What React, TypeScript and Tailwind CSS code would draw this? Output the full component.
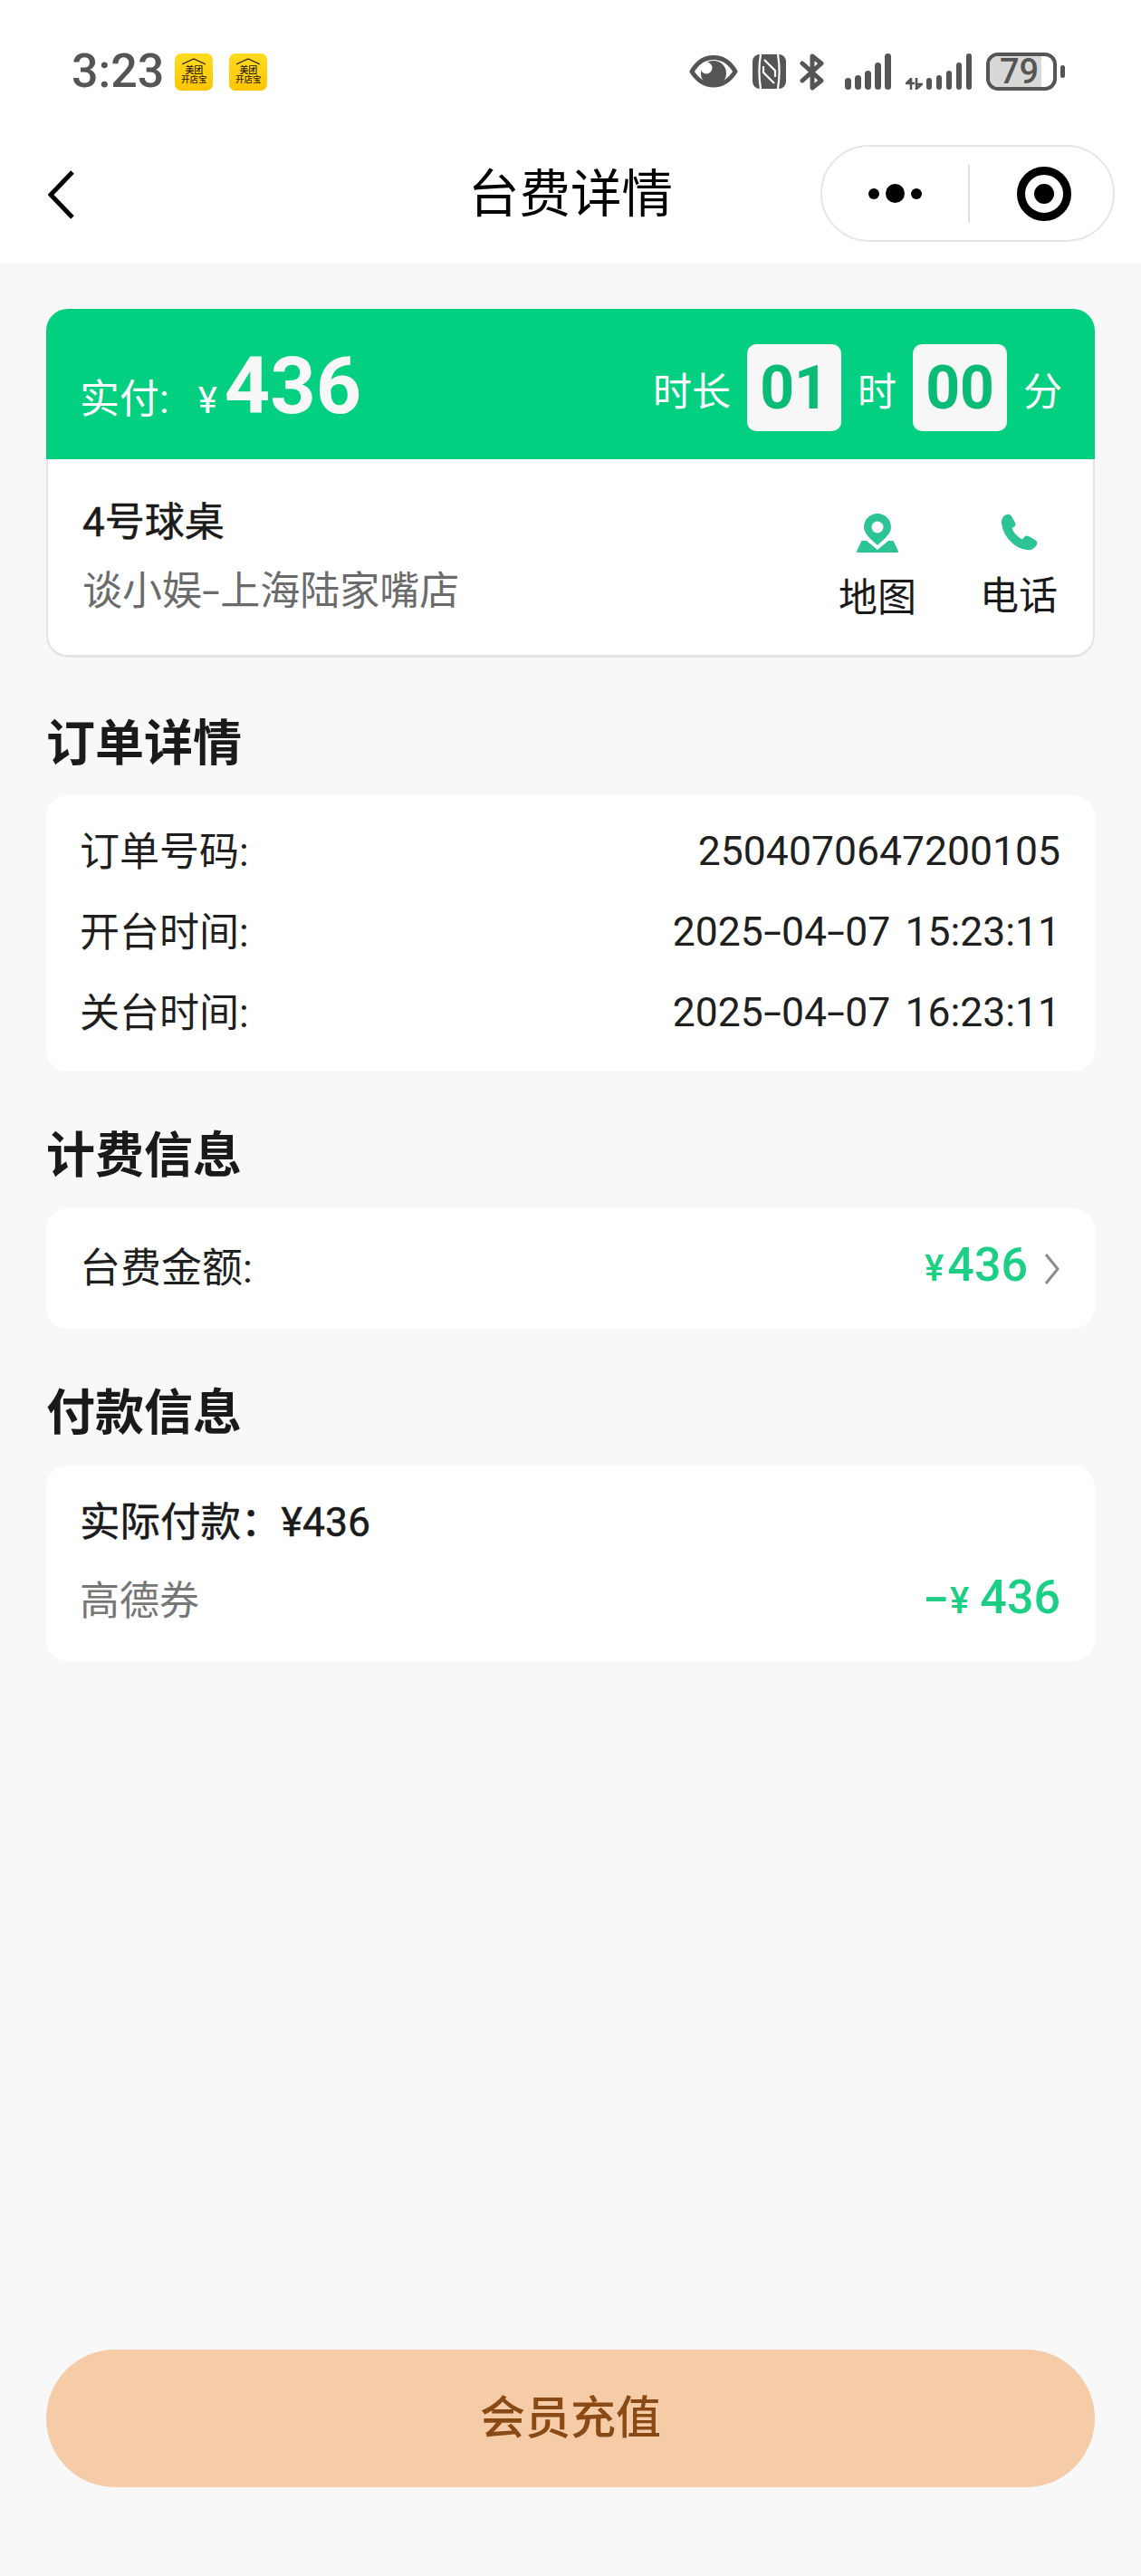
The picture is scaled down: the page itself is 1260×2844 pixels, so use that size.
import React from "react";

const StoreIcon = () => (
  <div className="flex h-[41px] w-[42px] flex-col items-center rounded-[7px] bg-gradient-to-b from-[#ffdc1e] to-[#ffc400] pt-[5px] font-medium text-[#2b2000]">
    <svg width="26" height="8" viewBox="0 0 26 8" className="shrink-0">
      <path d="M0 7 L13 1 L26 7" fill="none" stroke="#2b2000" strokeWidth="1.2" />
    </svg>
    <span className="mt-[1px] text-[10px] leading-[10px]">美团</span>
    <span className="text-[9.5px] leading-[10px]">开店宝</span>
  </div>
);

const EyeIcon = () => (
  <svg width="54" height="36" viewBox="0 0 54 36">
    <path d="M3 18 C10 6 18 2.5 27 2.5 C36 2.5 44 6 51 18 C44 29 36 33 27 33 C18 33 10 29 3 18Z" fill="none" stroke="#555" strokeWidth="5" strokeLinejoin="round" />
    <circle cx="27" cy="20" r="14" fill="#555" />
    <circle cx="19" cy="14" r="6.5" fill="#fff" />
  </svg>
);

const NfcIcon = () => (
  <svg width="37" height="38" viewBox="0 0 37 38">
    <rect width="37" height="38" rx="8" fill="#555" />
    <path d="M9 0 C7 12 7 26 9 38 M28 0 C30 12 30 26 28 38" fill="none" stroke="#fff" strokeWidth="2.2" />
    <path d="M13 6 L25 18 V25 M12 13 V20 L24 32" fill="none" stroke="#fff" strokeWidth="2.2" />
  </svg>
);

const BluetoothIcon = () => (
  <svg width="27" height="41" viewBox="0 0 27 41">
    <path d="M3 11 L24 30 L14 38 V3 L24 11 L3 30" fill="none" stroke="#555" strokeWidth="5" strokeLinecap="round" strokeLinejoin="round" />
  </svg>
);

const SignalBars = () => (
  <div className="flex items-end gap-[4.5px]">
    <div className="h-[13px] w-[6.5px] rounded-full bg-[#555]" />
    <div className="h-[16px] w-[6.5px] rounded-full bg-[#555]" />
    <div className="h-[21px] w-[6.5px] rounded-full bg-[#555]" />
    <div className="h-[30px] w-[6.5px] rounded-full bg-[#555]" />
    <div className="h-[40px] w-[6.5px] rounded-full bg-[#555]" />
  </div>
);

const DataArrows = () => (
  <svg width="19" height="13" viewBox="0 0 19 13">
    <path d="M6 13 V1 L1 6 H10 M12 0 V12 L18 7 H12" fill="none" stroke="#555" strokeWidth="2.6" />
  </svg>
);

const Battery = () => (
  <div className="flex items-center gap-[4px]">
    <div className="relative flex h-[42px] w-[78px] items-center justify-center overflow-hidden rounded-[13px] border-[4px] border-[#555]">
      <div className="absolute inset-y-0 left-0 w-[57px] bg-[#d8d8d8]" />
      <span className="relative pr-[5px] text-[38px] font-medium leading-none text-[#555]">79</span>
    </div>
    <div className="h-[14px] w-[5px] rounded-full bg-[#555]" />
  </div>
);

const PinIcon = () => (
  <svg width="46" height="43" viewBox="0 0 46 43">
    <path d="M23 0 C14.7 0 8 6.7 8 15 C8 23 17 29 23 35 C29 29 38 23 38 15 C38 6.7 31.3 0 23 0Z" fill="#2cc397" />
    <circle cx="23" cy="15" r="6.5" fill="#fff" />
    <path d="M5.5 30 H11 L23 40 L35 30 H40.5 L46 41.5 Q46 43 44.5 43 H1.5 Q0 43 0 41.5Z" fill="#2cc397" />
  </svg>
);

const PhoneIcon = () => (
  <svg width="41" height="41" viewBox="0 0 41 41">
    <path d="M7 1 C9 0.5 11 1.5 12 3 L16 10 C17 12 16.5 13.5 15 14.5 L12.5 16 C14 21 19 26 24 28.5 L26 26 C27 24.5 29 24 31 25 L38 29 C40 30 41 32 40 34 C38 38 34 41 29 40 C14 38 2 24 1 10 C0.8 6 3 2 7 1Z" fill="#2cc397" />
  </svg>
);

// the reference font has a much wider hyphen than Roboto
const Dash = () => <span className="mx-[4px] inline-block scale-x-[1.6]">-</span>;

const SectionTitle = ({ children, top }: { children: React.ReactNode; top: string }) => (
  <h2 className={`flex h-[60px] items-center text-[54px] font-bold text-[#1a1a1a] ${top}`}>{children}</h2>
);

const InfoRow = ({ label, children }: { label: string; children: React.ReactNode }) => (
  <div className="flex h-[89px] items-center justify-between pl-[37px] pr-[38px] text-[#1f1f1f]">
    <span className="text-[44px]">{label}</span>
    <span className="text-[44.5px] [word-spacing:5px]">{children}</span>
  </div>
);

export default function App() {
  return (
    <div className="flex min-h-[2844px] w-[1260px] flex-col bg-[#f8f8f8] font-['Roboto','Noto_Sans_CJK_SC',sans-serif]">
      <header className="bg-white">
        <div className="flex h-[158px] items-center justify-between pl-[79px] pr-[84px]">
          <div className="flex items-center">
            <span className="text-[52px] font-medium leading-none text-[#555]">3:23</span>
            <div className="ml-[12px] flex gap-[18px]">
              <StoreIcon />
              <StoreIcon />
            </div>
          </div>
          <div className="flex items-center">
            <EyeIcon />
            <div className="ml-[16px]">
              <NfcIcon />
            </div>
            <div className="ml-[15px]">
              <BluetoothIcon />
            </div>
            <div className="ml-[23px]">
              <SignalBars />
            </div>
            <div className="ml-[16px] flex items-end gap-[4px] self-end pb-[1px]">
              <DataArrows />
              <SignalBars />
            </div>
            <div className="ml-[16px]">
              <Battery />
            </div>
          </div>
        </div>
        <div className="grid h-[132px] grid-cols-[1fr_auto_1fr] items-start pt-[2px]">
          <div className="pl-[53px] pt-[28px]">
            <svg width="29" height="54" viewBox="0 0 29 54">
              <path d="M27 2 L3 27 L27 52" fill="none" stroke="#000" strokeWidth="5" />
            </svg>
          </div>
          <h1 className="flex h-[107px] items-center pt-[4px] text-[56.5px] text-black">台费详情</h1>
          <div className="mr-[29px] flex h-[107px] w-[325px] items-center justify-self-end rounded-full border-2 border-[#e6e6e6]">
            <div className="flex w-[161px] items-center justify-center gap-[7px]">
              <div className="h-[12px] w-[12px] rounded-full bg-black" />
              <div className="h-[21px] w-[21px] rounded-full bg-black" />
              <div className="h-[12px] w-[12px] rounded-full bg-black" />
            </div>
            <div className="h-[64px] w-[2px] bg-[#e2e2e2]" />
            <div className="flex flex-1 items-center justify-center pl-[6px]">
              <div className="flex h-[60px] w-[60px] items-center justify-center rounded-full border-[9px] border-black">
                <div className="h-[22px] w-[22px] rounded-full bg-black" />
              </div>
            </div>
          </div>
        </div>
      </header>

      <main className="flex flex-1 flex-col px-[51px] pb-[98px] pt-[51px]">
        <section className="overflow-hidden rounded-[24px]">
          <div className="flex h-[166px] items-center justify-between bg-[#03cf80] pl-[37px] pr-[36px] pt-[8px] text-white">
            <div className="flex items-baseline">
              <span className="text-[44px]">实付:</span>
              <span className="ml-[32px] text-[40px]">¥</span>
              <span className="ml-[8px] text-[88px] font-bold leading-none text-[#f7f7f7]">436</span>
            </div>
            <div className="flex items-center gap-[18px] text-[43px]">
              <span className="pt-[10px]">时长</span>
              <div className="flex h-[96px] w-[104px] items-center justify-center rounded-[10px] bg-[#f7f7f7] text-[66px] font-bold text-[#0abb76]">01</div>
              <span className="pt-[10px]">时</span>
              <div className="flex h-[96px] w-[104px] items-center justify-center rounded-[10px] bg-[#f7f7f7] text-[66px] font-bold text-[#0abb76]">00</div>
              <span className="pt-[10px]">分</span>
            </div>
          </div>
          <div className="flex h-[219px] items-center justify-between rounded-b-[24px] border-x-2 border-b-[3px] border-[#e4e4e4] bg-white pl-[38px] pr-[39px]">
            <div className="flex flex-col">
              <span className="text-[44px] leading-[60px] text-[#1a1a1a] [-webkit-text-stroke:0.5px_#1a1a1a]">4号球桌</span>
              <span className="mt-[16px] text-[44px] leading-[60px] text-[#6b6b6b]">
                谈小娱<Dash />上海陆家嘴店
              </span>
            </div>
            <div className="flex gap-[70px] pt-[24px] text-[43px] leading-[56px] text-[#1a1a1a]">
              <div className="flex w-[86px] flex-col items-center gap-[22px]">
                <PinIcon />
                <span>地图</span>
              </div>
              <div className="flex w-[86px] flex-col items-center gap-[22px]">
                <PhoneIcon />
                <span>电话</span>
              </div>
            </div>
          </div>
        </section>

        <SectionTitle top="mt-[65px] mb-[27px]">订单详情</SectionTitle>
        <section className="rounded-[24px] bg-white pb-[20px] pt-[18px]">
          <InfoRow label="订单号码:">2504070647200105</InfoRow>
          <InfoRow label="开台时间:">
            2025<Dash />04<Dash />07 15:23:11
          </InfoRow>
          <InfoRow label="关台时间:">
            2025<Dash />04<Dash />07 16:23:11
          </InfoRow>
        </section>

        <SectionTitle top="mt-[63px] mb-[28px]">计费信息</SectionTitle>
        <section className="flex h-[133px] items-center justify-between rounded-[24px] bg-white pl-[37px] pr-[38px]">
          <span className="text-[45px] text-[#1f1f1f]">台费金额:</span>
          <div className="flex items-center gap-[18px]">
            <div className="flex items-baseline font-medium text-[#1ccf85]">
              <span className="mr-[4px] text-[40px]">¥</span>
              <span className="text-[52px] leading-none">436</span>
            </div>
            <svg width="18" height="36" viewBox="0 0 18 36">
              <path d="M2 2 L15 18 L2 34" fill="none" stroke="#8c8c8c" strokeWidth="3" />
            </svg>
          </div>
        </section>

        <SectionTitle top="mt-[63px] mb-[28px]">付款信息</SectionTitle>
        <section className="flex h-[216px] flex-col rounded-[24px] bg-white pl-[37px] pr-[38px] pt-[19px]">
          <div className="flex h-[88px] items-center text-[44.5px] text-[#1a1a1a] [-webkit-text-stroke:0.5px_#1a1a1a]">实际付款：¥436</div>
          <div className="flex h-[85px] items-center justify-between">
            <span className="text-[44px] text-[#777]">高德券</span>
            <div className="flex items-baseline font-medium text-[#1ccf85]">
              <span className="inline-block scale-x-[1.6] text-[52px] leading-none">-</span>
              <span className="ml-[6px] text-[40px]">¥</span>
              <span className="ml-[12px] text-[52px] leading-none">436</span>
            </div>
          </div>
        </section>

        <button className="mt-auto flex h-[152px] w-full items-center justify-center rounded-full bg-[#f6cba8] text-[50px] font-medium text-[#8a4a16]">
          会员充值
        </button>
      </main>
    </div>
  );
}
